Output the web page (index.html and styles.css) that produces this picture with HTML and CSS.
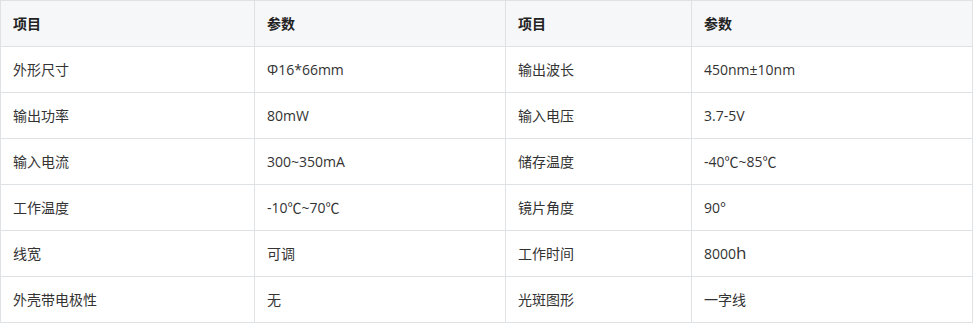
FILE: index.html
```html
<!DOCTYPE html>
<html>
	<head>
		<meta charset="UTF-8">
		<title>参数</title>
		<link rel="stylesheet" href="styles.css">
	</head>
	<body>
		<table class="spec">
			<colgroup>
				<col class="c1">
				<col class="c2">
				<col class="c3">
				<col class="c4">
			</colgroup>
			<thead>
				<tr>
					<th>项目</th>
					<th>参数</th>
					<th>项目</th>
					<th>参数</th>
				</tr>
			</thead>
			<tbody>
				<tr>
					<td>外形尺寸</td>
					<td>Φ16*66mm</td>
					<td>输出波长</td>
					<td>450nm±10nm</td>
				</tr>
				<tr>
					<td>输出功率</td>
					<td>80mW</td>
					<td>输入电压</td>
					<td>3.7-5V</td>
				</tr>
				<tr>
					<td>输入电流</td>
					<td>300~350mA</td>
					<td>储存温度</td>
					<td>-40℃~85℃</td>
				</tr>
				<tr>
					<td>工作温度</td>
					<td>-10℃~70℃</td>
					<td>镜片角度</td>
					<td>90°</td>
				</tr>
				<tr>
					<td>线宽</td>
					<td>可调</td>
					<td>工作时间</td>
					<td>8000<span class="big">h</span></td>
				</tr>
				<tr>
					<td>外壳带电极性</td>
					<td>无</td>
					<td>光斑图形</td>
					<td>一字线</td>
				</tr>
			</tbody>
		</table>
	</body>
</html>
```

FILE: styles.css
```css
body{
	margin: 0;
	background: #fff;
	font-family: "Open Sans", "Noto Sans CJK SC", sans-serif;
	font-size: 14px;
	color: #333;
}
.spec{
	width: 972px;
	border-collapse: collapse;
	table-layout: fixed;
}
.spec .c1{ width: 254px; }
.spec .c2{ width: 251px; }
.spec .c3{ width: 186px; }
.spec .c4{ width: 281px; }
.spec th,
.spec td{
	height: 45px;
	padding: 0 12px;
	border: 1px solid #dfe2e5;
	text-align: left;
	vertical-align: middle;
	line-height: 20px;
	white-space: nowrap;
}
.spec th{
	background: #f6f7f9;
	font-weight: bold;
	color: #222;
}
.spec .big{
	font-size: 17px;
}
```
